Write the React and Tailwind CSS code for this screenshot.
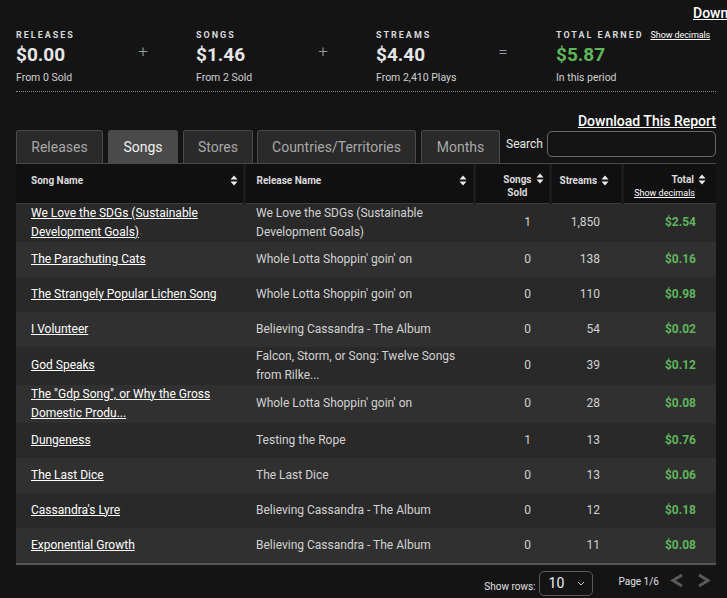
import React from 'react'

const rows = [
  { song: 'We Love the SDGs (Sustainable Development Goals)', release: 'We Love the SDGs (Sustainable Development Goals)', sold: 1, streams: '1,850', total: '$2.54', tall: true },
  { song: 'The Parachuting Cats', release: "Whole Lotta Shoppin' goin' on", sold: 0, streams: '138', total: '$0.16' },
  { song: 'The Strangely Popular Lichen Song', release: "Whole Lotta Shoppin' goin' on", sold: 0, streams: '110', total: '$0.98' },
  { song: 'I Volunteer', release: 'Believing Cassandra - The Album', sold: 0, streams: '54', total: '$0.02' },
  { song: 'God Speaks', release: 'Falcon, Storm, or Song: Twelve Songs from Rilke...', sold: 0, streams: '39', total: '$0.12', tall: true },
  { song: 'The "Gdp Song", or Why the Gross Domestic Produ...', release: "Whole Lotta Shoppin' goin' on", sold: 0, streams: '28', total: '$0.08', tall: true },
  { song: 'Dungeness', release: 'Testing the Rope', sold: 1, streams: '13', total: '$0.76' },
  { song: 'The Last Dice', release: 'The Last Dice', sold: 0, streams: '13', total: '$0.06' },
  { song: "Cassandra's Lyre", release: 'Believing Cassandra - The Album', sold: 0, streams: '12', total: '$0.18' },
  { song: 'Exponential Growth', release: 'Believing Cassandra - The Album', sold: 0, streams: '11', total: '$0.08' },
]

const tabs = [
  { name: 'Releases', cls: 'w-[87px] mr-[5px]' },
  { name: 'Songs', cls: 'w-[70px] mr-[5px]' },
  { name: 'Stores', cls: 'w-[70px] mr-[4px]' },
  { name: 'Countries/Territories', cls: 'w-[159px] mr-[5px]' },
  { name: 'Months', cls: 'w-[79px] mr-[6px]' },
]

function SortIcon() {
  return (
    <svg width="8" height="11" viewBox="0 0 8 11" className="inline-block shrink-0">
      <path d="M4 0.5 L7.5 4.5 H0.5 Z" fill="#eee" />
      <path d="M4 10.5 L7.5 6.5 H0.5 Z" fill="#eee" />
    </svg>
  )
}

function Stat({ label, value, sub, op, green, extra }) {
  return (
    <div className="flex w-[180px] shrink-0">
      <div className={extra ? 'w-[170px]' : 'w-[108px]'}>
        <div className="flex items-center gap-[7px] h-[12px]">
          <span className="text-[9px] font-bold tracking-[0.22em] text-[#d8d8d8]">{label}</span>
          {extra && <a className="text-[9px] underline text-white -tracking-[0.01em]">Show decimals</a>}
        </div>
        <div className={`mt-[1px] text-[19px] font-bold leading-[24px] ${green ? 'text-[#5fb65b]' : 'text-[#e6e6e6]'}`}>{value}</div>
        <div className="mt-[4px] text-[10.5px] leading-[14px] text-[#d0d0d0]">{sub}</div>
      </div>
      {op && <div className="w-[38px] text-center text-[17px] leading-none pt-[13px] text-[#9a9a9a] font-light">{op}</div>}
    </div>
  )
}

function App() {
  return (
    <div className="w-[727px] h-[598px] overflow-hidden bg-[#141414] text-[#d0d0d0]" style={{ fontFamily: 'Roboto, "Liberation Sans", sans-serif' }}>
      <div className="h-[30px] pl-[693px] pt-[1px] whitespace-nowrap">
        <a className="text-[14px] leading-[18px] underline text-white font-medium">Download This Report</a>
      </div>

      <div className="mx-[16px] w-[700px]">
        <div className="flex border-b border-dotted border-[#8a8a8a] pb-[6px]">
          <Stat label="RELEASES" value="$0.00" sub="From 0 Sold" op="+" />
          <Stat label="SONGS" value="$1.46" sub="From 2 Sold" op="+" />
          <Stat label="STREAMS" value="$4.40" sub="From 2,410 Plays" op="=" />
          <Stat label="TOTAL EARNED" value="$5.87" sub="In this period" green extra />
        </div>

        <div className="flex justify-end mt-[20px] h-[18px]">
          <a className="text-[14px] leading-[18px] underline text-white font-medium">Download This Report</a>
        </div>

        <div className="flex items-end mt-[0px] border-b border-[#4a4a4a]">
          {tabs.map(t => (
            <div
              key={t.name}
              className={`${t.cls} h-[33px] flex items-center justify-center text-[14px] rounded-t-[3px] border border-b-0 border-[#4a4a4a] ${t.name === 'Songs' ? 'bg-[#4a4a4a] text-[#f0f0f0]' : 'bg-[#2a2a2a] text-[#a8a8a8]'}`}
            >
              {t.name}
            </div>
          ))}
          <div className="flex items-center self-start mt-[1px]">
            <span className="text-[12px] text-[#e8e8e8] mr-[4px]">Search</span>
            <div className="w-[169px] h-[26px] rounded-[5px] border border-[#6a6a6a] bg-[#141414]" />
          </div>
        </div>

        <table className="w-[700px] table-fixed border-collapse">
          <colgroup>
            <col className="w-[228px]" />
            <col className="w-[230px]" />
            <col className="w-[76px]" />
            <col className="w-[72px]" />
            <col className="w-[94px]" />
          </colgroup>
          <thead>
            <tr className="bg-[#101010] h-[39px] border-b border-[#3c3c3c]">
              <th className="align-top pt-[9px] pl-[15px] pr-[5px] text-left text-[10px] font-bold text-[#dcdcdc] border-r-[3px] border-[#1c1c1c]">
                <div className="flex justify-between items-center"><span>Song Name</span><SortIcon /></div>
              </th>
              <th className="align-top pt-[9px] pl-[11px] pr-[6px] text-left text-[10px] font-bold text-[#dcdcdc] border-r-[3px] border-[#1c1c1c]">
                <div className="flex justify-between items-center"><span>Release Name</span><SortIcon /></div>
              </th>
              <th className="align-top pt-[9px] pr-[5px] text-[10px] font-bold text-[#dcdcdc] leading-[13px] border-r-[3px] border-[#1c1c1c]">
                <div className="flex justify-end items-start gap-[4px]">
                  <span className="text-center">Songs<br />Sold</span>
                  <SortIcon />
                </div>
              </th>
              <th className="align-top pt-[9px] pl-[8px] text-[10px] font-bold text-[#dcdcdc] border-r-[3px] border-[#1c1c1c]">
                <div className="flex items-center gap-[4px]"><span>Streams</span><SortIcon /></div>
              </th>
              <th className="align-top pt-[9px] pr-[10px] text-right text-[10px] font-bold text-[#dcdcdc] leading-[13px]">
                <div className="flex justify-end items-center gap-[4px]"><span>Total</span><SortIcon /></div>
                <a className="block text-[9px] font-normal underline text-white mt-[1px] pr-[11px]">Show decimals</a>
              </th>
            </tr>
          </thead>
          <tbody>
            {rows.map((r, i) => (
              <tr key={i} className={`${i % 2 === 0 ? 'bg-[#292929]' : 'bg-[#303030]'} ${r.tall ? 'h-[38px]' : 'h-[35px]'} text-[12px] leading-[19px]`}>
                <td className="pl-[15px] pr-[6px] align-middle">
                  <a className="underline text-white">{r.song}</a>
                </td>
                <td className="pl-[12px] pr-[8px] align-middle text-[#d2d2d2]">{r.release}</td>
                <td className="pr-[19px] text-right align-middle text-[#d2d2d2]">{r.sold}</td>
                <td className="pr-[22px] text-right align-middle text-[#d2d2d2]">{r.streams}</td>
                <td className="pr-[20px] text-right align-middle font-bold text-[#5fb65b]">{r.total}</td>
              </tr>
            ))}
          </tbody>
        </table>
        <div className="h-[2px] bg-[#555]" />

        <div className="flex justify-end items-start mt-[6px] pr-[4px]">
          <span className="text-[10px] text-[#e0e0e0] mt-[8px] mr-[3px]">Show rows:</span>
          <div className="w-[54px] h-[25px] rounded-[5px] border border-[#5a5a5a] flex items-center justify-between pl-[9px] pr-[7px]">
            <span className="text-[14px] text-[#f0f0f0]">10</span>
            <svg width="8" height="5" viewBox="0 0 8 5"><path d="M1 1 L4 4 L7 1" fill="none" stroke="#ccc" strokeWidth="1" /></svg>
          </div>
          <span className="text-[10px] text-[#e0e0e0] ml-[26px] mt-[3px]">Page 1/6</span>
          <div className="flex gap-[11px] ml-[10px] mt-[2px]">
            <svg width="16" height="15" viewBox="0 0 16 15"><path d="M13 2 L4 7.5 L13 13" fill="none" stroke="#5a5a5a" strokeWidth="3" /></svg>
            <svg width="16" height="15" viewBox="0 0 16 15"><path d="M3 2 L12 7.5 L3 13" fill="none" stroke="#5a5a5a" strokeWidth="3" /></svg>
          </div>
        </div>
      </div>
    </div>
  )
}

export default App
